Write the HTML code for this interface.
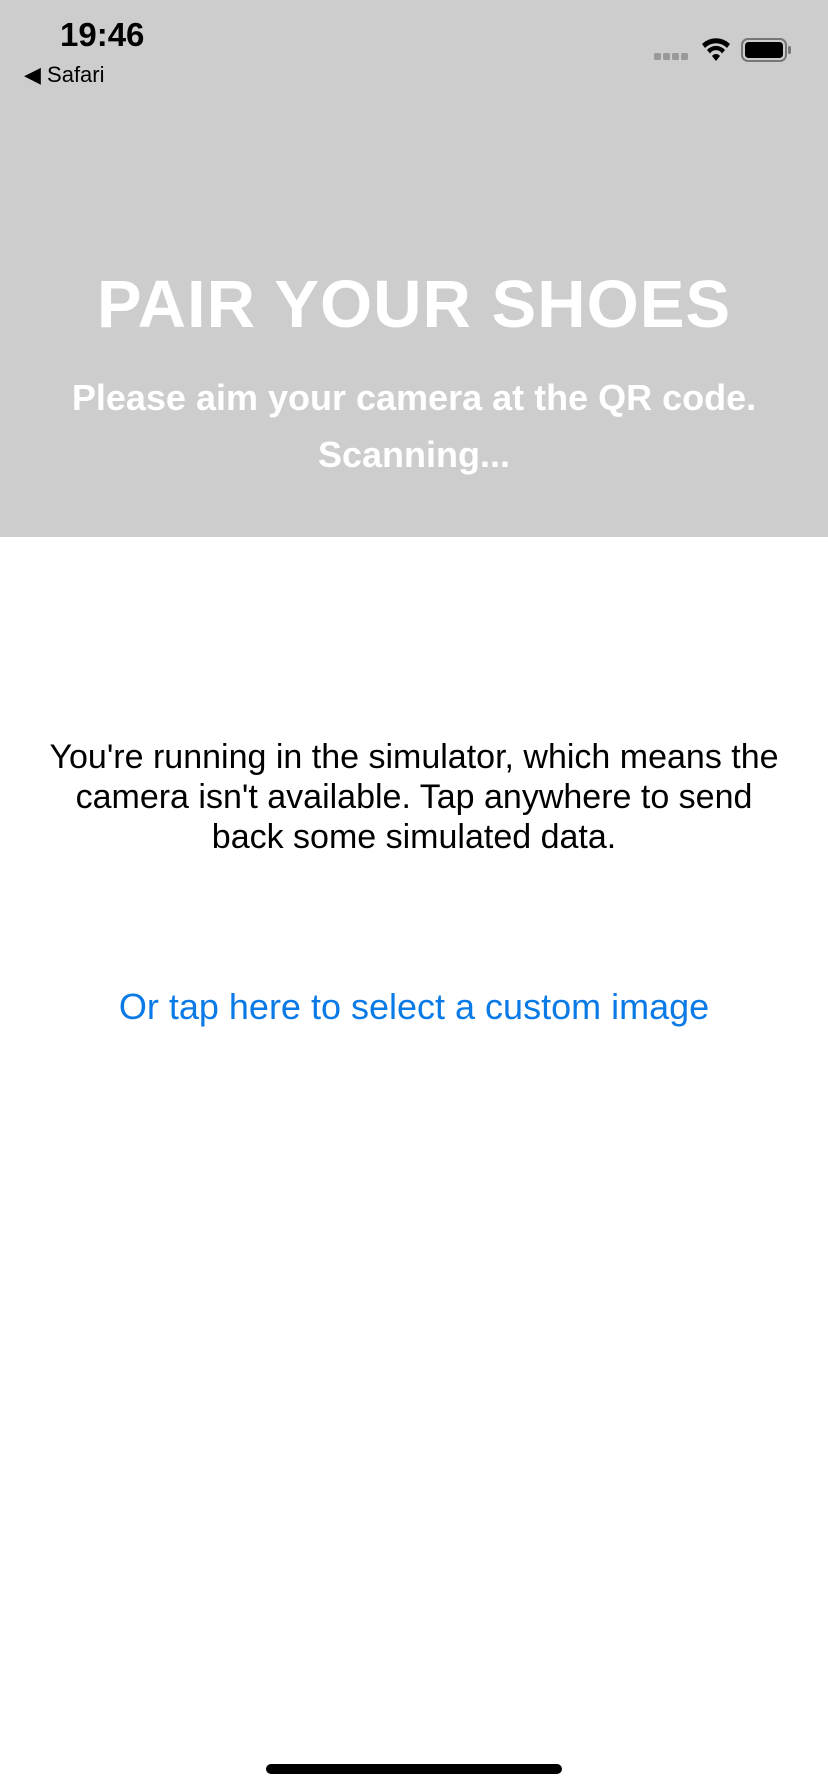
<!DOCTYPE html>
<html><head><meta charset="utf-8"><style>
body{margin:0;width:828px;height:1792px;background:#fff;font-family:"Liberation Sans",sans-serif;position:relative;overflow:hidden}
.top{position:absolute;left:0;top:0;width:828px;height:537px;background:#cdcdcd}
.abs{position:absolute;white-space:nowrap}
.c{left:0;width:828px;text-align:center}
</style></head><body>
<div class="top"></div>
<div class="abs" style="left:60px;top:16px;font-size:33px;font-weight:bold;color:#000">19:46</div>
<div class="abs" style="left:24px;top:62px;font-size:22px;color:#000">◀ Safari</div>
<svg class="abs" style="left:650px;top:34px" width="150" height="30" viewBox="0 0 150 30">
<g fill="#999"><rect x="4" y="19" width="7" height="7" rx="1.5"/><rect x="13" y="19" width="7" height="7" rx="1.5"/><rect x="22" y="19" width="7" height="7" rx="1.5"/><rect x="31" y="19" width="7" height="7" rx="1.5"/></g>
<path d="M52 10 A20 20 0 0 1 80 10 L77 14 A15 15 0 0 0 55 14 Z M57 16 A12 12 0 0 1 75 16 L72 19.5 A7 7 0 0 0 60 19.5Z M62 22 A5 5 0 0 1 70 22 L66 27Z" fill="#000"/>
<rect x="92" y="5" width="44" height="22" rx="6" fill="none" stroke="#777" stroke-width="2"/>
<rect x="95" y="8" width="38" height="16" rx="3.5" fill="#000"/>
<rect x="138" y="12" width="3" height="8" rx="1.5" fill="#777"/>
</svg>
<div class="abs c" style="top:266px;font-size:67px;font-weight:900;color:#fff;letter-spacing:1px">PAIR YOUR SHOES</div>
<div class="abs c" style="top:377px;font-size:36px;font-weight:bold;color:#fff">Please aim your camera at the QR code.</div>
<div class="abs c" style="top:434px;font-size:36px;font-weight:bold;color:#fff">Scanning...</div>
<div class="abs c" style="top:737px;font-size:34px;line-height:40px;color:#000">You're running in the simulator, which means the<br>camera isn't available. Tap anywhere to send<br>back some simulated data.</div>
<div class="abs c" style="top:986px;font-size:36px;color:#0a7ae6">Or tap here to select a custom image</div>
<div class="abs" style="left:266px;top:1764px;width:296px;height:10px;border-radius:5px;background:#000"></div>
</body></html>
